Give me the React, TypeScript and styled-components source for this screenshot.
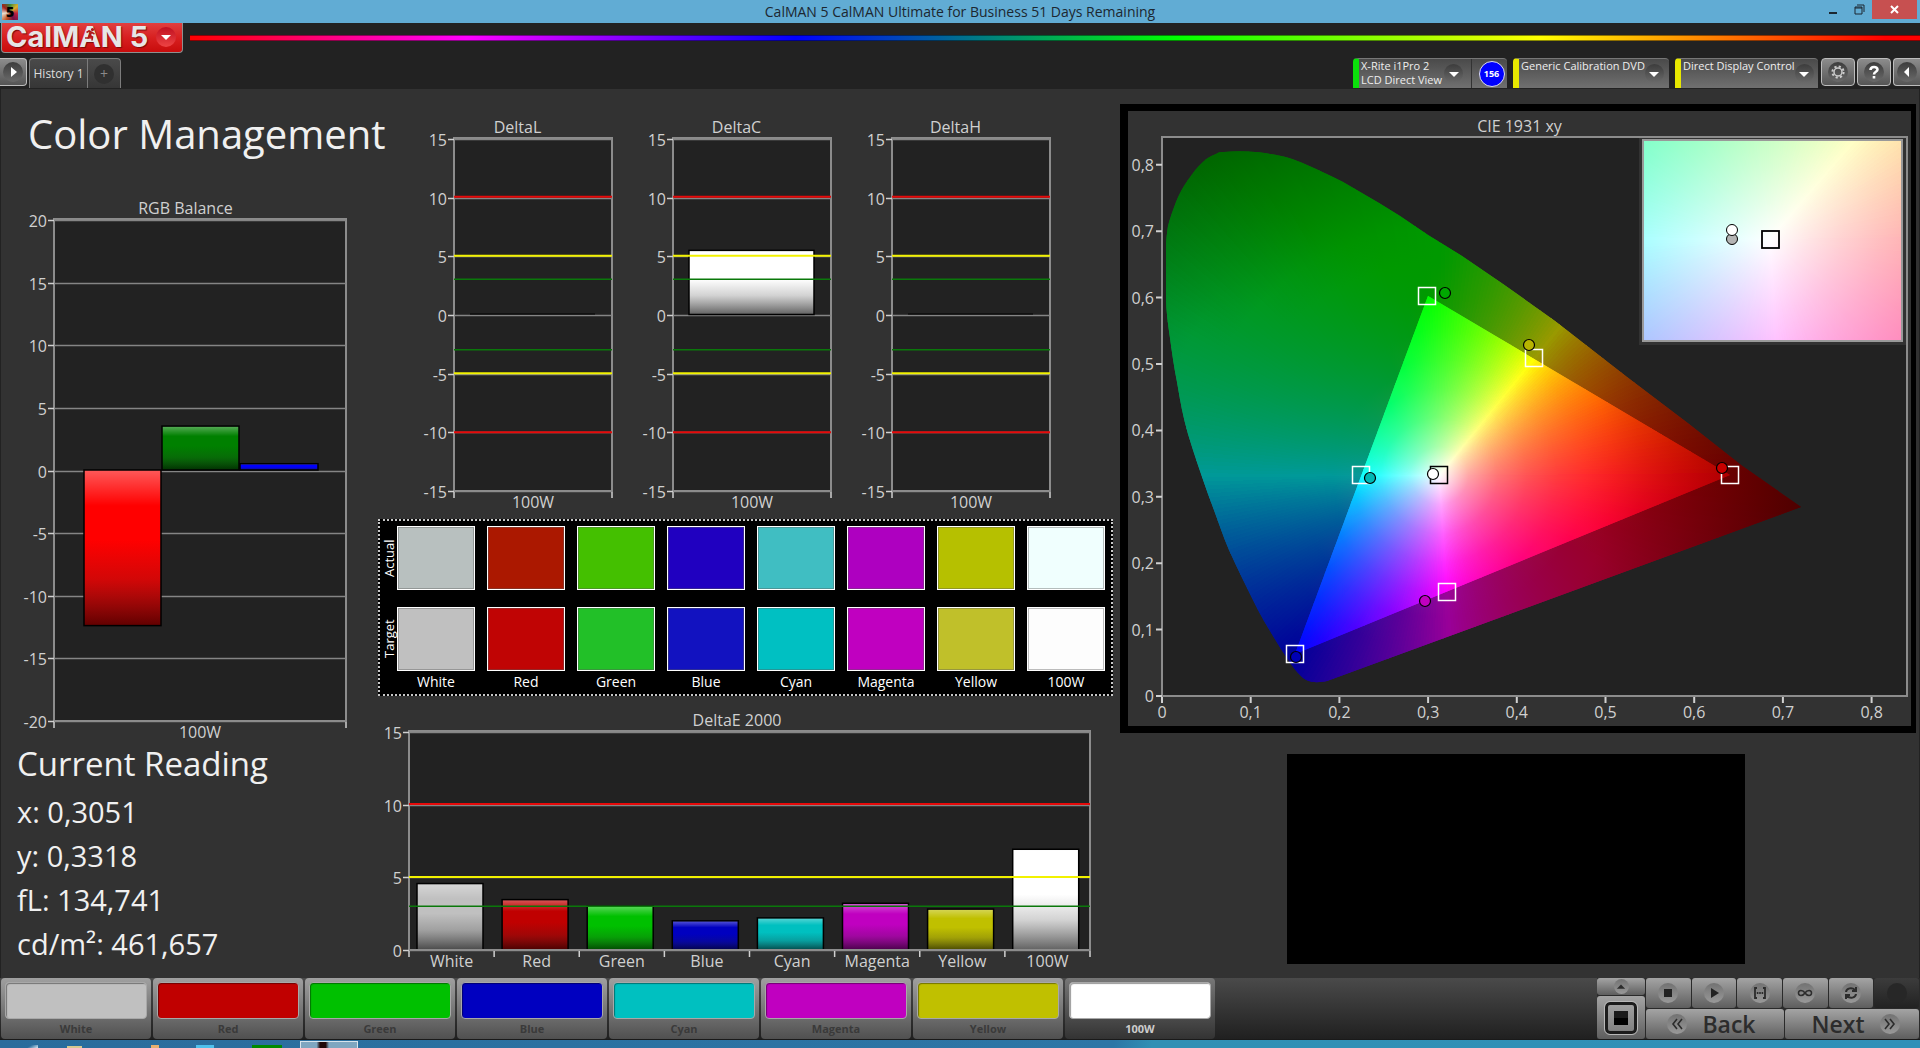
import React from 'react';
import styled, { createGlobalStyle } from 'styled-components';

const FONT = '"Open Sans", "Noto Sans", sans-serif';

const GlobalStyle = createGlobalStyle`
  * { box-sizing: border-box; }
  body { margin: 0; background: #222; font-family: ${FONT}; color: #f0f0f0; }
  button { font-family: inherit; padding: 0; border: 0; cursor: pointer; }
  h1, h2, p, figure { margin: 0; font-weight: 400; }
`;

const Screen = styled.div`
  display: flex;
  flex-direction: column;
  min-height: 100vh;
`;

/* ---------- title bar ---------- */

const TitleBar = styled.header`
  display: grid;
  grid-template-columns: 1fr auto 1fr;
  align-items: center;
  height: 23px;
  background: #61acd4;
  color: #1c2730;
  font-size: 14px;
  line-height: 22px;
`;

const AppIcon = styled.span`
  width: 16px;
  height: 16px;
  margin-left: 2px;
  background: conic-gradient(#3a8a3a, #d8b030, #c02040, #701048, #c05020, #e8e0d0, #a02020, #3a8a3a);
  color: #000;
  font-size: 14px;
  font-weight: 800;
  line-height: 16px;
  text-align: center;
`;

const WindowButtons = styled.div`
  display: flex;
  align-self: start;
  justify-content: flex-end;
  padding-right: 3px;
`;

const WindowButton = styled.button<{ $close?: boolean }>`
  display: flex;
  align-items: center;
  justify-content: center;
  width: ${(p) => (p.$close ? 45 : 26)}px;
  height: 19px;
  background: ${(p) => (p.$close ? '#c75050' : 'transparent')};
  color: ${(p) => (p.$close ? '#fff' : '#1c2730')};
`;

/* ---------- brand row ---------- */

const BrandRow = styled.div`
  display: flex;
  align-items: flex-start;
  gap: 7px;
  height: 35px;
`;

const Brand = styled.button`
  position: relative;
  display: flex;
  align-items: center;
  justify-content: space-between;
  width: 182px;
  height: 30px;
  margin-left: 1px;
  padding: 0 6px 2px 4px;
  border: solid #8f8f8f;
  border-width: 0 1px 1px;
  border-radius: 0 0 4px 4px;
  background: linear-gradient(#e04040, #d82020 50%, #c80c0c);
`;

const BrandName = styled.span`
  color: #e6e6e6;
  font-family: Inter, sans-serif;
  font-size: 29px;
  font-weight: 700;
  line-height: 26px;
  text-shadow: 1px 1px 1px #7a0a0a;
  white-space: nowrap;
`;

const Runner = styled.svg`
  position: absolute;
  left: 82px;
  top: 5px;
`;

const Rainbow = styled.div`
  flex: 1;
  height: 6px;
  margin-top: 12px;
  background: linear-gradient(90deg, #f00, #f0f 16%, #00f 35%, #0f0 57%, #ff0 78%, #f00 98%);
  border: solid rgba(0, 0, 0, 0.45);
  border-width: 1px 0;
`;

/* ---------- tab row ---------- */

const TabRow = styled.nav`
  display: flex;
  align-items: flex-start;
  height: 31px;
`;

const Round = styled.span<{ $size: number; $tone?: string }>`
  display: inline-flex;
  flex: none;
  align-items: center;
  justify-content: center;
  width: ${(p) => p.$size}px;
  height: ${(p) => p.$size}px;
  border-radius: 50%;
  background: ${(p) => p.$tone ?? 'linear-gradient(#3c3c3c, #6a6a6a)'};
`;

const ChromeButton = styled.button<{ $side?: 'left' | 'right' }>`
  display: flex;
  align-items: center;
  justify-content: center;
  width: ${(p) => (p.$side ? 27 : 34)}px;
  height: 28px;
  margin-right: ${(p) => (p.$side ? 0 : 2)}px;
  border: 1px solid #bdbdbd;
  border-left-width: ${(p) => (p.$side === 'left' ? 0 : 1)}px;
  border-right-width: ${(p) => (p.$side === 'right' ? 0 : 1)}px;
  border-radius: ${(p) => (p.$side === 'left' ? '0 4px 4px 0' : p.$side === 'right' ? '4px 0 0 4px' : '4px')};
  background: linear-gradient(#8c8c8c, #555);
`;

const Tabs = styled.div`
  display: flex;
  height: 30px;
  margin-left: 2px;
  border: solid #7c7c7c;
  border-width: 1px 1px 0;
  border-radius: 4px 4px 0 0;
  background: linear-gradient(#4a4a4a, #363636);
`;

const Tab = styled.button`
  width: 58px;
  border-right: 1px solid #7c7c7c;
  background: none;
  color: #ddd;
  font-size: 12px;
`;

const AddTab = styled.button`
  width: 32px;
  background: none;
  color: #8a8a8a;
  font-size: 14px;
  line-height: 18px;
`;

const Devices = styled.div`
  display: flex;
  gap: 6px;
  margin-left: auto;
  margin-right: 3px;
`;

const Device = styled.div<{ $width: number; $stripe: string }>`
  display: flex;
  width: ${(p) => p.$width}px;
  height: 30px;
  border-top: 1px solid #777;
  border-left: 6px solid ${(p) => p.$stripe};
  border-radius: 4px 4px 0 0;
  background: linear-gradient(#4a4a4a, #707070);
`;

const DeviceMenu = styled.button`
  display: flex;
  flex: 1;
  align-items: flex-start;
  justify-content: space-between;
  padding: 0 8px 0 2px;
  background: none;
  color: #eee;
  font-size: 11px;
  line-height: 14px;
  text-align: left;
  white-space: nowrap;

  ${Round} { margin-top: 5px; }
`;

const Luminance = styled.span`
  display: flex;
  align-items: center;
  justify-content: center;
  width: 36px;
  padding-left: 4px;
  border-left: 1px solid #333;

  span {
    width: 26px;
    height: 26px;
    border: 1px solid #dde;
    border-radius: 50%;
    background: #00f;
    color: #fff;
    font-size: 9px;
    font-weight: 700;
    line-height: 24px;
    text-align: center;
  }
`;

/* ---------- workspace ---------- */

const Workspace = styled.main`
  display: grid;
  flex: 1;
  grid-template-columns: minmax(0, 369fr) minmax(0, 748fr) minmax(0, 801fr);
  border: solid #222;
  border-width: 0 1px;
  background: #323232;
`;

const LeftColumn = styled.section`
  padding-top: 19px;
`;

const PageTitle = styled.h1`
  height: 90px;
  padding-left: 27px;
  font-size: 40px;
  line-height: 52px;
  white-space: nowrap;
`;

const Readings = styled.div`
  padding: 4px 0 0 16px;

  h2 {
    font-size: 33px;
    line-height: 36px;
    margin-bottom: 8px;
  }
  p {
    font-size: 29px;
    line-height: 44px;
  }
`;

const MiddleColumn = styled.section`
  padding-top: 28px;
`;

const DeltaRow = styled.div`
  display: grid;
  grid-template-columns: repeat(3, 219fr) 53fr;
  padding-left: 38px;
`;

const Figure = styled.figure<{ $right?: number }>`
  margin-right: ${(p) => p.$right ?? 0}px;
  color: #d0d0d0;

  svg {
    display: block;
    width: 100%;
    height: auto;
    overflow: visible;
  }
  text {
    fill: #d0d0d0;
    font-size: 16px;
  }
`;

const Caption = styled.figcaption`
  font-size: 16px;
  line-height: 20px;
  text-align: center;
`;

const SwatchPanel = styled.div`
  display: grid;
  grid-template-columns: 5px repeat(8, 1fr);
  grid-template-rows: 64px 64px;
  column-gap: 12px;
  row-gap: 17px;
  height: 177px;
  margin: 7px 5px 14px 8px;
  padding: 5px 6px 0 0;
  border: 2px dotted #c8c8c8;
  background: #000;
  color: #fff;
  font-size: 14px;
  line-height: 18px;
  text-align: center;
`;

const SideLabel = styled.span`
  width: 17px;
  font-size: 13px;
  writing-mode: vertical-rl;
  transform: rotate(180deg);
`;

const Swatch = styled.div<{ $color: string }>`
  border: 1px solid #fff;
  background: ${(p) => p.$color};
  box-shadow: inset 0 0 0 1px rgba(90, 90, 90, 0.4);
`;

const SwatchName = styled.span`
  margin-top: -15px;
`;

const RightColumn = styled.section`
  padding: 15px 3px 0 2px;
`;

const CieFrame = styled.div`
  padding-top: 5px;
  border: solid #000;
  border-width: 7px 5px 7px 8px;
`;

const BlackScreen = styled.div`
  width: 57.5%;
  height: 210px;
  margin: 21px 0 0 21%;
  background: #000;
`;

/* ---------- bottom bar ---------- */

const BottomBar = styled.footer`
  display: flex;
  height: 62px;
  border-bottom: 1px solid #1a1a1a;
  background: linear-gradient(#4a4a4a, #202020);
`;

const Patches = styled.div`
  display: flex;
  flex: 1;
  gap: 2px;
  padding-left: 1px;
`;

const Patch = styled.button<{ $on?: boolean }>`
  display: flex;
  flex-direction: column;
  width: 150px;
  height: 61px;
  padding: 4px 4px 0;
  border-radius: 4px;
  background: ${(p) => (p.$on ? 'linear-gradient(#777, #333)' : 'linear-gradient(#a0a0a0, #505050)')};
  color: ${(p) => (p.$on ? '#ccc' : '#3a3a3a')};
  font-size: 11px;
  font-weight: 700;
  line-height: 20px;
  text-align: center;
`;

const PatchColor = styled.span<{ $color: string }>`
  width: 142px;
  height: 38px;
  border: 1px solid #a8a8a8;
  border-radius: 4px;
  background: ${(p) => p.$color};
  box-shadow: inset 1px 1px 1px rgba(0, 0, 0, 0.4);
`;

const PatchName = styled.span`
  width: 142px;
`;

const Transport = styled.div`
  display: grid;
  grid-template-columns: 48px 273px;
  gap: 1px;
  padding-right: 1px;
  background: #2a2a2a;
`;

const Stack = styled.div`
  display: flex;
  flex-direction: column;
  gap: 1px;
`;

const Row = styled.div`
  display: flex;
  flex: 1;
  gap: 1px;
`;

const Key = styled.button<{ $height?: number; $off?: boolean }>`
  display: flex;
  flex: ${(p) => (p.$height ? 'none' : '1')};
  height: ${(p) => (p.$height ? `${p.$height}px` : 'auto')};
  align-items: center;
  justify-content: center;
  border-radius: 3px;
  background: ${(p) => (p.$off ? 'linear-gradient(#3c3c3c, #222)' : 'linear-gradient(#a4a4a4, #5e5e5e)')};
  color: #2c2c2c;
`;

const PageKey = styled(Key)`
  justify-content: space-between;
  padding: 0 28px 0 21px;
  font-size: 23px;
  font-weight: 600;
  line-height: 28px;

  &:last-child { padding: 0 19px 0 27px; }
`;

const SquareKey = styled.span`
  display: flex;
  align-items: center;
  justify-content: center;
  width: 32px;
  height: 32px;
  border: 3px solid #1c1c1c;
  border-radius: 5px;
  outline: 1px solid #b8b8b8;
  background: linear-gradient(#a0a0a0, #808080);

  &::after {
    content: '';
    width: 14px;
    height: 14px;
    background: linear-gradient(#1a1a1a 50%, #000 50%);
  }
`;

const TaskBar = styled.div`
  display: flex;
  align-items: flex-end;
  height: 8px;
  padding-left: 24px;
  background: linear-gradient(100deg, #2a6c9c, #2c76a6 58%, #3090b4 60%, #2f90b8);
`;

const TaskIcon = styled.span<{ $w: number; $h: number; $gap: number; $color: string }>`
  width: ${(p) => p.$w}px;
  height: ${(p) => p.$h}px;
  margin-right: ${(p) => p.$gap}px;
  background: ${(p) => p.$color};
`;

const ActiveTask = styled.span`
  width: 58px;
  height: 7px;
  border: solid #d8e4ec;
  border-width: 1px 1px 0;
  background: linear-gradient(90deg, #7fa6c0 28%, #200808 34%, #200808 44%, #7fa6c0 50%);
`;

/* ---------- charts ---------- */

type Bar = { from: number; width: number; value: number; color: string };

type BarChartProps = {
  label: string;
  width: number;
  height: number;
  left: number;
  plotWidth: number;
  plotHeight: number;
  min: number;
  max: number;
  limits?: number[];
  bars: Bar[];
  names: string[];
};

const LIMIT_COLORS: Record<number, string> = { 10: '#e60a0a', 5: '#f2f200', 3: '#0a780a' };

function BarChart(props: BarChartProps) {
  const { label, width, height, left, plotWidth, plotHeight, min, max, limits = [], bars, names } = props;
  const y = (v: number) => 1 + ((max - v) * plotHeight) / (max - min);
  const gridY = (v: number) => Math.round(2 + ((max - v) * (plotHeight - 1)) / (max - min)) + 0.5;
  const ticks: number[] = [];
  for (let v = max; v >= min; v -= 5) ticks.push(v);
  const step = plotWidth / names.length;
  const bottom = 1 + plotHeight;
  const id = `shine-${label.replace(/\s/g, '')}`;

  return (
    <svg viewBox={`0 0 ${width} ${height}`} role="img" aria-label={label}>
      <defs>
        <linearGradient id={id} x1="0" x2="0" y1="0" y2="1">
          <stop offset="0" stopColor="#fff" stopOpacity="0.35" />
          <stop offset="0.23" stopColor="#fff" stopOpacity="0" />
          <stop offset="0.45" stopColor="#222" stopOpacity="0" />
          <stop offset="0.7" stopColor="#222" stopOpacity="0.2" />
          <stop offset="1" stopColor="#000" stopOpacity="0.62" />
        </linearGradient>
      </defs>
      <rect x={left} y={1} width={plotWidth} height={plotHeight} fill="#222" stroke="#8c8c8c" strokeWidth="2" />
      {ticks.map((v) => (
        <g key={v}>
          <path d={`M${left} ${gridY(v)}h${plotWidth}`} stroke="#858585" strokeWidth="1.5" />
          <path d={`M${left - 6} ${gridY(v)}h6`} stroke="#d0d0d0" strokeWidth="1.5" />
          <text x={left - 7} y={gridY(v) + 6} textAnchor="end">{v}</text>
        </g>
      ))}
      {bars.map((b) => {
        const top = b.value === 0 ? y(0) - 1 : Math.min(y(b.value), y(0));
        const h = Math.max(Math.abs(y(b.value) - y(0)), 1);
        const box = { x: left + b.from, y: top, width: b.width, height: h };
        return (
          <g key={b.from}>
            <rect {...box} fill={b.color} />
            {b.value !== 0 && <rect {...box} fill={`url(#${id})`} stroke="#000" strokeWidth="1.5" />}
          </g>
        );
      })}
      {limits.map((v) => (
        <path
          key={v}
          d={`M${left} ${y(v)}h${plotWidth}`}
          stroke={LIMIT_COLORS[Math.abs(v)]}
          strokeWidth={Math.abs(v) === 3 ? 1.5 : 2}
        />
      ))}
      <path d={`M${left} ${bottom}h${plotWidth}`} stroke="#8c8c8c" strokeWidth="2" />
      {[...names, ''].map((n, i) => (
        <path key={n} d={`M${left + i * step} ${bottom + 1}v6`} stroke="#d0d0d0" strokeWidth="1.5" />
      ))}
      {names.map((n, i) => (
        <text key={n} x={left + (i + 0.5) * step} y={bottom + 17} textAnchor="middle">{n}</text>
      ))}
    </svg>
  );
}

/* Plot-space scale of the chromaticity diagram. */
const WHITE = { x: 0.3127, y: 0.329 };

type Scale = { x0: number; y0: number; kx: number; ky: number };
const MAIN: Scale = { x0: 0, y0: 557.5, kx: 887, ky: 662.5 };
const INSET: Scale = { x0: 608 - WHITE.x * 5096, y0: 103 + WHITE.y * 3620, kx: 5096, ky: 3620 };

function chroma(x: number, y: number, dim: number) {
  const z = 1 - x - y;
  const rgb = [
    3.2406 * x - 1.5372 * y - 0.4986 * z,
    -0.9689 * x + 1.8758 * y + 0.0415 * z,
    0.0557 * x - 0.204 * y + 1.057 * z,
  ].map((c) => Math.max(c, 0));
  const top = Math.max(...rgb);
  const redFall = Math.max(0, x - 0.49) * 2.1;
  const greenFall = Math.max(0, -0.498 * x + 0.867 * y - 0.454) * 1.5;
  const k = (255 * dim * Math.max(0.4, 1 - redFall - greenFall)) / top;
  return `rgb(${rgb.map((c) => Math.round(c * k)).join(',')})`;
}

type WheelProps = { id: string; scale: Scale; count: number; radius: number; stops: number; dim: number };

/* Thin sectors around the white point, each shaded outward by the chromaticity it passes. */
function ColorWheel({ id, scale, count, radius, stops, dim }: WheelProps) {
  const cx = scale.x0 + WHITE.x * scale.kx;
  const cy = scale.y0 - WHITE.y * scale.ky;
  const step = (2 * Math.PI) / count;
  return (
    <g shapeRendering="crispEdges">
      <circle cx={cx} cy={cy} r={10} fill={chroma(WHITE.x, WHITE.y, dim)} />
      {Array.from({ length: count }, (_, i) => {
        const mid = i * step;
        const at = (a: number, r: number) => [cx + Math.cos(a) * r, cy - Math.sin(a) * r];
        const [ex, ey] = at(mid, radius);
        const [ax, ay] = at(mid - step * 0.55, radius);
        const [bx, by] = at(mid + step * 1.5, radius);
        return (
          <g key={i}>
            <linearGradient id={`${id}${i}`} gradientUnits="userSpaceOnUse" x1={cx} y1={cy} x2={ex} y2={ey}>
              {Array.from({ length: stops }, (_, s) => {
                const t = s / (stops - 1);
                const x = WHITE.x + (Math.cos(mid) * radius * t) / scale.kx;
                const y = WHITE.y + (Math.sin(mid) * radius * t) / scale.ky;
                return <stop key={s} offset={t} stopColor={chroma(x, y, dim)} />;
              })}
            </linearGradient>
            <path d={`M${cx} ${cy}L${ax} ${ay}L${bx} ${by}Z`} fill={`url(#${id}${i})`} />
          </g>
        );
      })}
    </g>
  );
}

const LOCUS =
  'M4 111C4 104 5 97 6 90C8 82 11 74 14 66C17 58 21 51 26 44C31 37 35 31 41 26C45 22 49 20 54 18C57 16 59 16 62 16' +
  'C72 15 83 15 93 16C98 16 103 17 108 18C115 19 121 20 127 22C133 24 139 26 145 29C157 34 169 40 181 46L217 67L238 80L266 99L300 120' +
  'L341 148L393 185L465 241L527 288L579 329L639 371L165 545C160 546 152 547 147 545C144 544 142 543 139 540' +
  'C134 535 131 531 127 525L119 513C111 500 103 487 96 474C86 454 76 434 67 414C59 395 53 376 46 358' +
  'C39 338 32 318 26 298C21 281 18 264 15 246C12 231 10 217 8 202C6 188 4 175 4 161Z';

const TARGETS: [number, number, string][] = [
  [265, 160, '#fff'], [372, 222, '#fff'], [568, 339, '#fff'], [285, 456, '#fff'],
  [133, 518, '#fff'], [199, 339, '#fff'], [277, 339, '#000'],
];

const MEASURED: [number, number, string][] = [
  [283, 157, '#00a800'], [367, 209, '#b8b400'], [560, 332, '#c80000'], [263, 465, '#c000c0'],
  [134, 521, '#0000b4'], [208, 342, '#00b8b4'], [271, 338, '#fff'],
];

function CieChart() {
  const tenths = [0, 1, 2, 3, 4, 5, 6, 7, 8];
  const name = (n: number) => (n ? `0,${n}` : '0');
  return (
    <svg viewBox="0 0 783 590" role="img" aria-label="CIE 1931 xy">
      <defs>
        <clipPath id="locus"><path d={LOCUS} /></clipPath>
        <clipPath id="triangle"><path d="M266 160L568 339L133 518Z" /></clipPath>
        <clipPath id="inset"><rect x="481" y="4" width="258" height="201" /></clipPath>
      </defs>
      <rect x="34" y="1" width="745" height="559" fill="#222" stroke="#8c8c8c" strokeWidth="2" />
      {tenths.map((n) => (
        <g key={n}>
          <path d={`M28 ${560 - n * 66.4}h6M${34 + n * 88.7} 561v6`} stroke="#d0d0d0" strokeWidth="2" />
          <text x="26" y={566 - n * 66.4} textAnchor="end">{name(n)}</text>
          <text x={34 + n * 88.7} y="582" textAnchor="middle">{name(n)}</text>
        </g>
      ))}
      <g transform="translate(34 0)">
        <g clipPath="url(#locus)">
          <ColorWheel id="outer" scale={MAIN} count={360} radius={460} stops={14} dim={0.6} />
        </g>
        <g clipPath="url(#triangle)">
          <ColorWheel id="inner" scale={MAIN} count={360} radius={320} stops={12} dim={1} />
        </g>
        {TARGETS.map(([x, y, c]) => (
          <rect key={`${x}`} x={x - 8.5} y={y - 8.5} width="17" height="17" fill="none" stroke={c} strokeWidth="1.5" />
        ))}
        {MEASURED.map(([x, y, c]) => (
          <circle key={`${x}`} cx={x} cy={y} r="5.5" fill={c} stroke="#000" strokeWidth="1.2" />
        ))}
        <rect x="477" y="2" width="267" height="207" fill="#323232" />
        <g clipPath="url(#inset)">
          <ColorWheel id="zoomed" scale={INSET} count={240} radius={180} stops={6} dim={1} />
        </g>
        <rect x="481" y="4" width="259" height="201" fill="none" stroke="#999" strokeWidth="2" />
        <rect x="600" y="95" width="17" height="17" fill="none" stroke="#000" strokeWidth="1.8" />
        <circle cx="570" cy="103" r="5.5" fill="#b4b4b4" stroke="#000" />
        <circle cx="570" cy="94" r="5.5" fill="#fff" stroke="#000" />
      </g>
    </svg>
  );
}

/* ---------- icons ---------- */

const Arrow = ({ d, size = 12, fill = '#fff' }: { d: string; size?: number; fill?: string }) => (
  <svg width={size} height={size} viewBox="0 0 12 12" fill={fill} aria-hidden="true"><path d={d} /></svg>
);

const DOWN = 'M1 4h10L6 9z';
const Line = ({ d, width = 2 }: { d: string; width?: number }) => (
  <svg width="16" height="16" viewBox="0 0 16 16" fill="none" stroke="#2c2c2c" strokeWidth={width} aria-hidden="true">
    <path d={d} />
  </svg>
);

const KEY_TONE = 'linear-gradient(#727272, #999)';

/* ---------- data ---------- */

const PATCHES = [
  { name: 'White', actual: '#b8c0bf', target: '#c0c0c0', color: '#c0c0c0', delta: 4.55 },
  { name: 'Red', actual: '#ab1800', target: '#c00404', color: '#c00000', delta: 3.45 },
  { name: 'Green', actual: '#44c000', target: '#22c028', color: '#00c000', delta: 3.0 },
  { name: 'Blue', actual: '#2000c0', target: '#1212c0', color: '#0000c0', delta: 2.0 },
  { name: 'Cyan', actual: '#40bec2', target: '#00c0c2', color: '#00c0c0', delta: 2.2 },
  { name: 'Magenta', actual: '#ae00c0', target: '#c000c0', color: '#c000c0', delta: 3.2 },
  { name: 'Yellow', actual: '#b6c000', target: '#c0c02a', color: '#c0c000', delta: 2.8 },
  { name: '100W', actual: '#f0fffe', target: '#fdfdfd', color: '#fff', delta: 6.9 },
];

const LIMITS = [10, 5, 3, -3, -5, -10];

const DELTAS = [
  { name: 'DeltaL', value: 0 },
  { name: 'DeltaC', value: 5.45 },
  { name: 'DeltaH', value: 0 },
];

export default function App() {
  return (
    <Screen>
      <GlobalStyle />
      <TitleBar>
        <AppIcon>5</AppIcon>
        <span>CalMAN 5 CalMAN Ultimate for Business 51 Days Remaining</span>
        <WindowButtons>
          <WindowButton aria-label="Minimize">
            <svg width="10" height="10" viewBox="0 0 10 10"><path d="M1 7h8v2H1z" fill="currentColor" /></svg>
          </WindowButton>
          <WindowButton aria-label="Restore">
            <svg width="11" height="11" viewBox="0 0 11 11" fill="none" stroke="currentColor">
              <path d="M1 3h7v7H1zM1 4h7M3 1h7v7" />
            </svg>
          </WindowButton>
          <WindowButton $close aria-label="Close">
            <svg width="9" height="9" viewBox="0 0 9 9" stroke="currentColor" strokeWidth="2"><path d="M1 1l7 7M8 1L1 8" /></svg>
          </WindowButton>
        </WindowButtons>
      </TitleBar>

      <BrandRow>
        <Brand>
          <BrandName>CalMAN 5</BrandName>
          <Runner width="13" height="13" viewBox="0 0 13 13" fill="none" stroke="#b01818" strokeWidth="1.6" aria-hidden="true">
            <circle cx="8.5" cy="1.6" r="0.8" />
            <path d="M2.5 4.5L5 3L8 4.5L10.5 6M7.5 4.5L5.5 7.5L8.5 9L8 12.5M5.5 8L4 10H1" />
          </Runner>
          <Round $size={20} $tone="linear-gradient(#c01020, #e44)"><Arrow d={DOWN} /></Round>
        </Brand>
        <Rainbow />
      </BrandRow>

      <TabRow>
        <ChromeButton $side="left" aria-label="Expand"><Round $size={20}><Arrow d="M4 1l6 5-6 5z" /></Round></ChromeButton>
        <Tabs>
          <Tab>History 1</Tab>
          <AddTab aria-label="Add tab"><Round $size={20} $tone="#303030">+</Round></AddTab>
        </Tabs>
        <Devices>
          <Device $width={154} $stripe="#0be00b">
            <DeviceMenu>
              <span>X-Rite i1Pro 2<br />LCD Direct View</span>
              <Round $size={19}><Arrow d={DOWN} /></Round>
            </DeviceMenu>
            <Luminance><span>156</span></Luminance>
          </Device>
          <Device $width={156} $stripe="#e8e800">
            <DeviceMenu>Generic Calibration DVD<Round $size={19}><Arrow d={DOWN} /></Round></DeviceMenu>
          </Device>
          <Device $width={143} $stripe="#e8e800">
            <DeviceMenu>Direct Display Control<Round $size={19}><Arrow d={DOWN} /></Round></DeviceMenu>
          </Device>
        </Devices>
        <ChromeButton aria-label="Settings">
          <Round $size={20}>
            <svg width="14" height="14" viewBox="0 0 14 14" fill="none" stroke="#ccc" aria-hidden="true">
              <circle cx="7" cy="7" r="4" strokeWidth="1.5" />
              <circle cx="7" cy="7" r="5.6" strokeWidth="2" strokeDasharray="2.2 2.2" />
            </svg>
          </Round>
        </ChromeButton>
        <ChromeButton aria-label="Help">
          <Round $size={20}>
            <svg width="12" height="14" viewBox="0 0 12 14" fill="none" stroke="#fff" strokeWidth="2.6" aria-hidden="true">
              <path d="M2.5 5C2.5 1 9.5 1 9.5 4.5C9.5 7 6 6.5 6 9.5M6 11v2.5" />
            </svg>
          </Round>
        </ChromeButton>
        <ChromeButton $side="right" aria-label="Collapse"><Round $size={20}><Arrow d="M8 1L3 6l5 5z" /></Round></ChromeButton>
      </TabRow>

      <Workspace>
        <LeftColumn>
          <PageTitle>Color Management</PageTitle>
          <Figure>
            <Caption>RGB Balance</Caption>
            <BarChart
              label="RGB Balance"
              width={369}
              height={524}
              left={53}
              plotWidth={292}
              plotHeight={502}
              min={-20}
              max={20}
              names={['100W']}
              bars={[
                { from: 30, width: 77, value: -12.4, color: '#ff0000' },
                { from: 108, width: 77, value: 3.5, color: '#008000' },
                { from: 186, width: 78, value: 0.5, color: '#0000ff' },
              ]}
            />
          </Figure>
          <Readings>
            <h2>Current Reading</h2>
            <p>x: 0,3051</p>
            <p>y: 0,3318</p>
            <p>fL: 134,741</p>
            <p>cd/m²: 461,657</p>
          </Readings>
        </LeftColumn>

        <MiddleColumn>
          <DeltaRow>
            {DELTAS.map((d) => (
              <Figure key={d.name}>
                <Caption>{d.name}</Caption>
                <BarChart
                  label={d.name}
                  width={219}
                  height={375}
                  left={46}
                  plotWidth={158}
                  plotHeight={353}
                  min={-15}
                  max={15}
                  limits={LIMITS}
                  names={['100W']}
                  bars={[{ from: 16, width: 125, value: d.value, color: d.value ? '#fff' : '#000' }]}
                />
              </Figure>
            ))}
          </DeltaRow>

          <SwatchPanel>
            <SideLabel>Actual</SideLabel>
            {PATCHES.map((p) => <Swatch key={p.name} $color={p.actual} />)}
            <SideLabel>Target</SideLabel>
            {PATCHES.map((p) => <Swatch key={p.name} $color={p.target} />)}
            <span />
            {PATCHES.map((p) => <SwatchName key={p.name}>{p.name}</SwatchName>)}
          </SwatchPanel>

          <Figure $right={14}>
            <Caption>DeltaE 2000</Caption>
            <BarChart
              label="DeltaE 2000"
              width={734}
              height={245}
              left={39}
              plotWidth={681}
              plotHeight={219}
              min={0}
              max={15}
              limits={[10, 5, 3]}
              names={PATCHES.map((p) => p.name)}
              bars={PATCHES.map((p, i) => ({ from: 8 + i * 85.1, width: 66, value: p.delta, color: p.color }))}
            />
          </Figure>
        </MiddleColumn>

        <RightColumn>
          <CieFrame>
            <Figure>
              <Caption>CIE 1931 xy</Caption>
              <CieChart />
            </Figure>
          </CieFrame>
          <BlackScreen />
        </RightColumn>
      </Workspace>

      <BottomBar>
        <Patches>
          {PATCHES.map((p) => (
            <Patch key={p.name} $on={p.name === '100W'}>
              <PatchColor $color={p.color} />
              <PatchName>{p.name}</PatchName>
            </Patch>
          ))}
        </Patches>
        <Transport>
          <Stack>
            <Key $height={17} aria-label="Show more"><Round $size={15} $tone={KEY_TONE}><Arrow d="M1 8h10L6 3z" size={10} fill="#2c2c2c" /></Round></Key>
            <Key aria-label="Pattern window"><SquareKey /></Key>
          </Stack>
          <Stack>
            <Row>
              <Key aria-label="Stop"><Round $size={20} $tone={KEY_TONE}><Arrow d="M2 2h8v8H2z" fill="#222" /></Round></Key>
              <Key aria-label="Play"><Round $size={20} $tone={KEY_TONE}><Arrow d="M3 1l8 5-8 5z" fill="#222" /></Round></Key>
              <Key aria-label="Read series"><Round $size={20} $tone={KEY_TONE}><Line width={1.8} d="M5 3H3v10h2M11 3h2v10h-2M4.8 8h1.6M7.2 8h1.6M9.6 8h1.6" /></Round></Key>
              <Key aria-label="Read continuously"><Round $size={20} $tone={KEY_TONE}><Line width={1.6} d="M8 8C6 5 1.5 4.5 1.5 8S6 11 8 8S14.5 4.5 14.5 8S10 11 8 8z" /></Round></Key>
              <Key aria-label="Repeat"><Round $size={20} $tone={KEY_TONE}><Line d="M3 7C3.5 3 9 2 12 5M13 2v4h-4M13 9C12.5 13 7 14 4 11M3 14v-4h4" /></Round></Key>
              <Key $off aria-label="Record"><Round $size={20} $tone="#272727" /></Key>
            </Row>
            <Row>
              <PageKey><Round $size={20} $tone={KEY_TONE}><Line width={1.6} d="M8 3L4 8l4 5M13 3L9 8l4 5" /></Round>Back</PageKey>
              <PageKey>Next<Round $size={20} $tone={KEY_TONE}><Line width={1.6} d="M3 3l4 5-4 5M8 3l4 5-4 5" /></Round></PageKey>
            </Row>
          </Stack>
        </Transport>
      </BottomBar>

      <TaskBar>
        <TaskIcon $w={14} $h={3} $gap={29} $color="linear-gradient(150deg, transparent 40%, #d8e8f4)" />
        <TaskIcon $w={15} $h={2} $gap={69} $color="#d8c890" />
        <TaskIcon $w={8} $h={3} $gap={37} $color="#e8b070" />
        <TaskIcon $w={18} $h={3} $gap={38} $color="#50c0ec" />
        <TaskIcon $w={30} $h={3} $gap={18} $color="#008a00" />
        <ActiveTask />
      </TaskBar>
    </Screen>
  );
}
